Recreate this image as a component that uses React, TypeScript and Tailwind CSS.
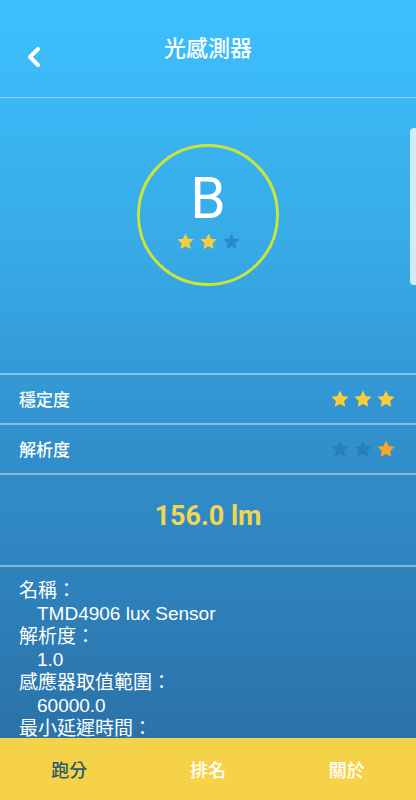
import { ChevronLeft } from "lucide-react";

const cjk = "font-['Noto_Sans_CJK_TC','Noto_Sans',sans-serif]";
const info = "font-['Liberation_Sans','Noto_Sans_CJK_TC',sans-serif]";

function Star({ color, size }: { color: string; size: number }) {
  return (
    <svg width={size} height={size} viewBox="0 0 24 24">
      <path
        d="M12 1.8l3.1 6.6 7.2.9-5.3 5 1.4 7.1L12 17.9l-6.4 3.5 1.4-7.1-5.3-5 7.2-.9z"
        fill={color}
      />
    </svg>
  );
}

function Row({ label, stars }: { label: string; stars: string[] }) {
  return (
    <div className="flex h-[50px] items-center justify-between border-b-2 border-white/40 pl-[19px] pr-[20px]">
      <span className={`${cjk} text-[17px] font-medium text-white`}>{label}</span>
      <div className="flex gap-[3px]">
        {stars.map((c, i) => (
          <Star key={i} color={c} size={20} />
        ))}
      </div>
    </div>
  );
}

const details = [
  ["名稱：", "TMD4906 lux Sensor"],
  ["解析度：", "1.0"],
  ["感應器取值範圍：", "60000.0"],
];

export default function App() {
  return (
    <div className="flex h-[800px] w-[416px] flex-col overflow-hidden">
      <div className="relative h-[738px] overflow-hidden bg-[linear-gradient(180deg,#3cc1fe_0%,#37a9e6_35%,#3190cc_60%,#2b72a9_100%)]">
        <div className="flex h-[98px] items-center border-b border-white/40 px-[18px]">
          <ChevronLeft className="mt-[16px] h-[32px] w-[32px] text-white" strokeWidth={3} />
          <div className={`${cjk} -ml-[32px] flex-1 pb-[4px] text-center text-[22px] font-medium text-white`}>
            光感測器
          </div>
        </div>

        <div className="flex justify-center pt-[46px] pb-[87px]">
          <div className="flex h-[142px] w-[142px] flex-col items-center rounded-full border-[3px] border-[#c9e43a]">
            <div className="mt-[22px] font-['Roboto',sans-serif] text-[57px] leading-[60px] font-normal text-white">B</div>
            <div className="mt-[3px] flex gap-[4px]">
              <Star color="#f8cd3c" size={19} />
              <Star color="#f8cd3c" size={19} />
              <Star color="#2a8bc8" size={19} />
            </div>
          </div>
        </div>

        <div className="border-t-2 border-white/40">
          <Row label="穩定度" stars={["#f8cd3c", "#f8cd3c", "#f8cd3c"]} />
          <Row label="解析度" stars={["#2a7fb9", "#2a7fb9", "#f7a62a"]} />
        </div>

        <div className="flex h-[92px] items-center justify-center border-b-2 border-white/40">
          <span className="mb-[8px] font-['Roboto',sans-serif] text-[27px] font-bold text-[#f0d654]">156.0 lm</span>
        </div>

        <div className={`${info} px-[19px] pt-[12px] text-[19px] leading-[23px] text-white`}>
          {details.map(([k, v]) => (
            <div key={k}>
              <div>{k}</div>
              <div className="pl-[18px]">{v}</div>
            </div>
          ))}
          <div>最小延遲時間：</div>
        </div>

        <div className="absolute top-[128px] right-0 h-[157px] w-[6px] rounded-l-[4px] bg-[#d3ebf8]" />
      </div>

      <div className={`${cjk} flex h-[62px] items-center bg-[#f6d249] text-[18px] font-medium`}>
        <div className="flex-1 text-center text-[#2b5b6b]">跑分</div>
        <div className="flex-1 text-center text-white">排名</div>
        <div className="flex-1 text-center text-white">關於</div>
      </div>
    </div>
  );
}
